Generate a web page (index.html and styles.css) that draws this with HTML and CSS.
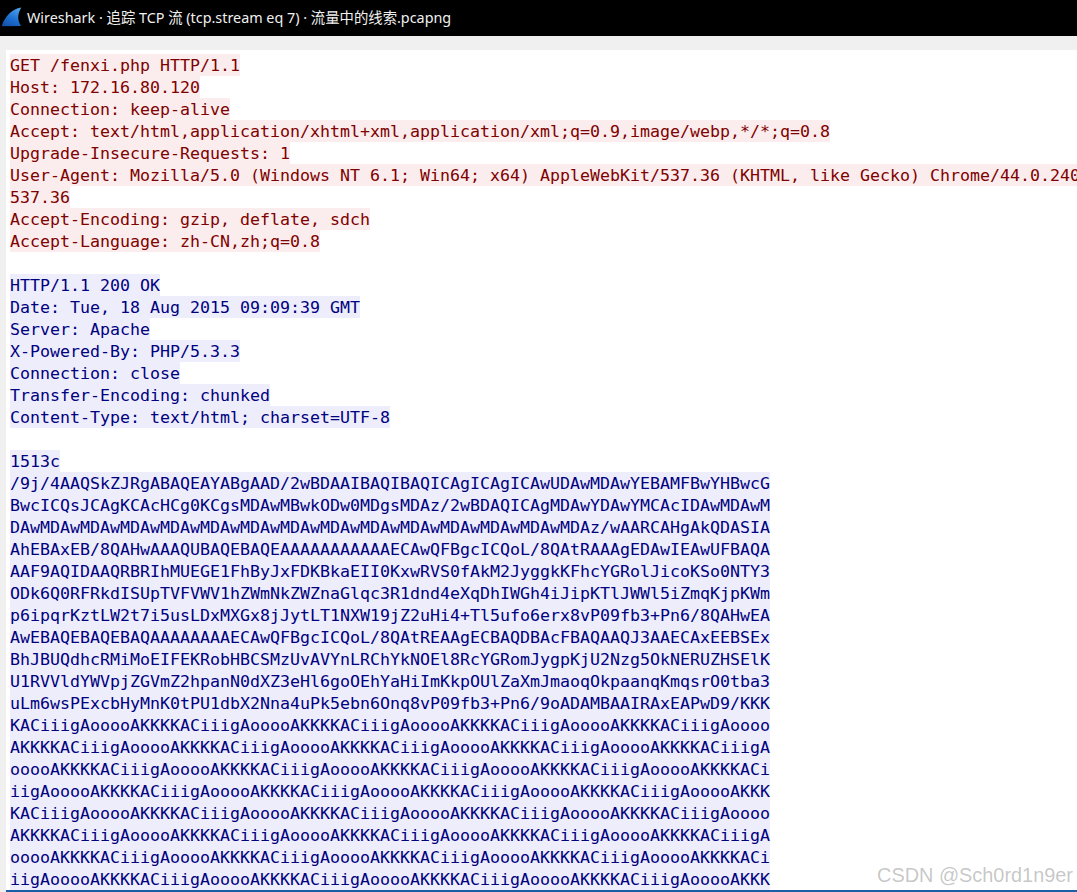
FILE: index.html
```html
<!DOCTYPE html>
<html lang="zh-CN">
<head>
<meta charset="utf-8">
<title>Wireshark · 追踪 TCP 流</title>
<link rel="stylesheet" href="styles.css">
</head>
<body>
<header class="titlebar">
<svg class="fin" width="22" height="22" viewBox="0 0 22 22" aria-hidden="true">
<defs><linearGradient id="fing" x1="0.7" y1="0" x2="0.2" y2="1"><stop offset="0" stop-color="#4aa0e8"/><stop offset="0.55" stop-color="#1c6fd0"/><stop offset="1" stop-color="#1450a8"/></linearGradient></defs>
<path d="M20.3 0.6C10.5 2 4 10 1 18.3C0.9 18.9 1.4 19.2 2 19.2L20 19C16.2 13.5 16.4 7 20.3 0.6Z" fill="url(#fing)"/>
</svg>
<span class="title">Wireshark · 追踪 TCP 流 (tcp.stream eq 7) · 流量中的线索.pcapng</span>
</header>
<main class="body-area">
<div class="stream">
<div class="line client"><span>GET /fenxi.php HTTP/1.1</span></div>
<div class="line client"><span>Host: 172.16.80.120</span></div>
<div class="line client"><span>Connection: keep-alive</span></div>
<div class="line client"><span>Accept: text/html,application/xhtml+xml,application/xml;q=0.9,image/webp,*/*;q=0.8</span></div>
<div class="line client"><span>Upgrade-Insecure-Requests: 1</span></div>
<div class="line client"><span>User-Agent: Mozilla/5.0 (Windows NT 6.1; Win64; x64) AppleWebKit/537.36 (KHTML, like Gecko) Chrome/44.0.2403.157 Safari/</span></div>
<div class="line client"><span>537.36</span></div>
<div class="line client"><span>Accept-Encoding: gzip, deflate, sdch</span></div>
<div class="line client"><span>Accept-Language: zh-CN,zh;q=0.8</span></div>
<div class="line"></div>
<div class="line server"><span>HTTP/1.1 200 OK</span></div>
<div class="line server"><span>Date: Tue, 18 Aug 2015 09:09:39 GMT</span></div>
<div class="line server"><span>Server: Apache</span></div>
<div class="line server"><span>X-Powered-By: PHP/5.3.3</span></div>
<div class="line server"><span>Connection: close</span></div>
<div class="line server"><span>Transfer-Encoding: chunked</span></div>
<div class="line server"><span>Content-Type: text/html; charset=UTF-8</span></div>
<div class="line"></div>
<div class="line server"><span>1513c</span></div>
<div class="line server"><span>/9j/4AAQSkZJRgABAQEAYABgAAD/2wBDAAIBAQIBAQICAgICAgICAwUDAwMDAwYEBAMFBwYHBwcG</span></div>
<div class="line server"><span>BwcICQsJCAgKCAcHCg0KCgsMDAwMBwkODw0MDgsMDAz/2wBDAQICAgMDAwYDAwYMCAcIDAwMDAwM</span></div>
<div class="line server"><span>DAwMDAwMDAwMDAwMDAwMDAwMDAwMDAwMDAwMDAwMDAwMDAwMDAwMDAwMDAz/wAARCAHgAkQDASIA</span></div>
<div class="line server"><span>AhEBAxEB/8QAHwAAAQUBAQEBAQEAAAAAAAAAAAECAwQFBgcICQoL/8QAtRAAAgEDAwIEAwUFBAQA</span></div>
<div class="line server"><span>AAF9AQIDAAQRBRIhMUEGE1FhByJxFDKBkaEII0KxwRVS0fAkM2JyggkKFhcYGRolJicoKSo0NTY3</span></div>
<div class="line server"><span>ODk6Q0RFRkdISUpTVFVWV1hZWmNkZWZnaGlqc3R1dnd4eXqDhIWGh4iJipKTlJWWl5iZmqKjpKWm</span></div>
<div class="line server"><span>p6ipqrKztLW2t7i5usLDxMXGx8jJytLT1NXW19jZ2uHi4+Tl5ufo6erx8vP09fb3+Pn6/8QAHwEA</span></div>
<div class="line server"><span>AwEBAQEBAQEBAQAAAAAAAAECAwQFBgcICQoL/8QAtREAAgECBAQDBAcFBAQAAQJ3AAECAxEEBSEx</span></div>
<div class="line server"><span>BhJBUQdhcRMiMoEIFEKRobHBCSMzUvAVYnLRChYkNOEl8RcYGRomJygpKjU2Nzg5OkNERUZHSElK</span></div>
<div class="line server"><span>U1RVVldYWVpjZGVmZ2hpanN0dXZ3eHl6goOEhYaHiImKkpOUlZaXmJmaoqOkpaanqKmqsrO0tba3</span></div>
<div class="line server"><span>uLm6wsPExcbHyMnK0tPU1dbX2Nna4uPk5ebn6Onq8vP09fb3+Pn6/9oADAMBAAIRAxEAPwD9/KKK</span></div>
<div class="line server"><span>KACiiigAooooAKKKKACiiigAooooAKKKKACiiigAooooAKKKKACiiigAooooAKKKKACiiigAoooo</span></div>
<div class="line server"><span>AKKKKACiiigAooooAKKKKACiiigAooooAKKKKACiiigAooooAKKKKACiiigAooooAKKKKACiiigA</span></div>
<div class="line server"><span>ooooAKKKKACiiigAooooAKKKKACiiigAooooAKKKKACiiigAooooAKKKKACiiigAooooAKKKKACi</span></div>
<div class="line server"><span>iigAooooAKKKKACiiigAooooAKKKKACiiigAooooAKKKKACiiigAooooAKKKKACiiigAooooAKKK</span></div>
<div class="line server"><span>KACiiigAooooAKKKKACiiigAooooAKKKKACiiigAooooAKKKKACiiigAooooAKKKKACiiigAoooo</span></div>
<div class="line server"><span>AKKKKACiiigAooooAKKKKACiiigAooooAKKKKACiiigAooooAKKKKACiiigAooooAKKKKACiiigA</span></div>
<div class="line server"><span>ooooAKKKKACiiigAooooAKKKKACiiigAooooAKKKKACiiigAooooAKKKKACiiigAooooAKKKKACi</span></div>
<div class="line server"><span>iigAooooAKKKKACiiigAooooAKKKKACiiigAooooAKKKKACiiigAooooAKKKKACiiigAooooAKKK</span></div>
</div>
</main>
<div class="watermark">CSDN @Sch0rd1n9er</div>
</body>
</html>
```
FILE: styles.css
```css
* { box-sizing: border-box; }
html, body { margin: 0; padding: 0; }
body {
  width: 1077px;
  height: 892px;
  overflow: hidden;
  position: relative;
  display: flex;
  flex-direction: column;
  background: #f0f0f0;
}
.titlebar {
  height: 36px;
  flex: none;
  background: #000;
  color: #f0f0f0;
  display: flex;
  align-items: center;
  padding-left: 1px;
  gap: 4px;
}
.fin { flex: none; }
.title {
  font-family: "Noto Sans", "Noto Sans CJK SC", sans-serif;
  font-size: 14.37px;
  white-space: nowrap;
  padding-bottom: 3px;
}
.body-area {
  flex: 1;
  min-height: 0;
  padding: 14px 0 0 6px;
  display: flex;
}
.stream {
  flex: 1;
  min-width: 0;
  background: #fff;
  padding: 4px 0 0 4px;
  overflow: hidden;
  border-bottom: 2px solid #1a5ea8;
  font-family: "DejaVu Sans Mono", monospace;
  font-size: 16.61px;
}
.line { height: 22px; white-space: pre; }
.line span { display: inline-block; height: 22px; line-height: 24px; vertical-align: top; }
.client span { background: #fbeded; color: #7f0000; }
.server span { background: #ededfb; color: #00007f; }
.watermark {
  position: absolute;
  right: 4px;
  top: 862px;
  font-family: "Liberation Sans", sans-serif;
  font-size: 19.9px;
  line-height: 26px;
  color: rgba(130, 130, 130, 0.45);
  white-space: nowrap;
}
```
